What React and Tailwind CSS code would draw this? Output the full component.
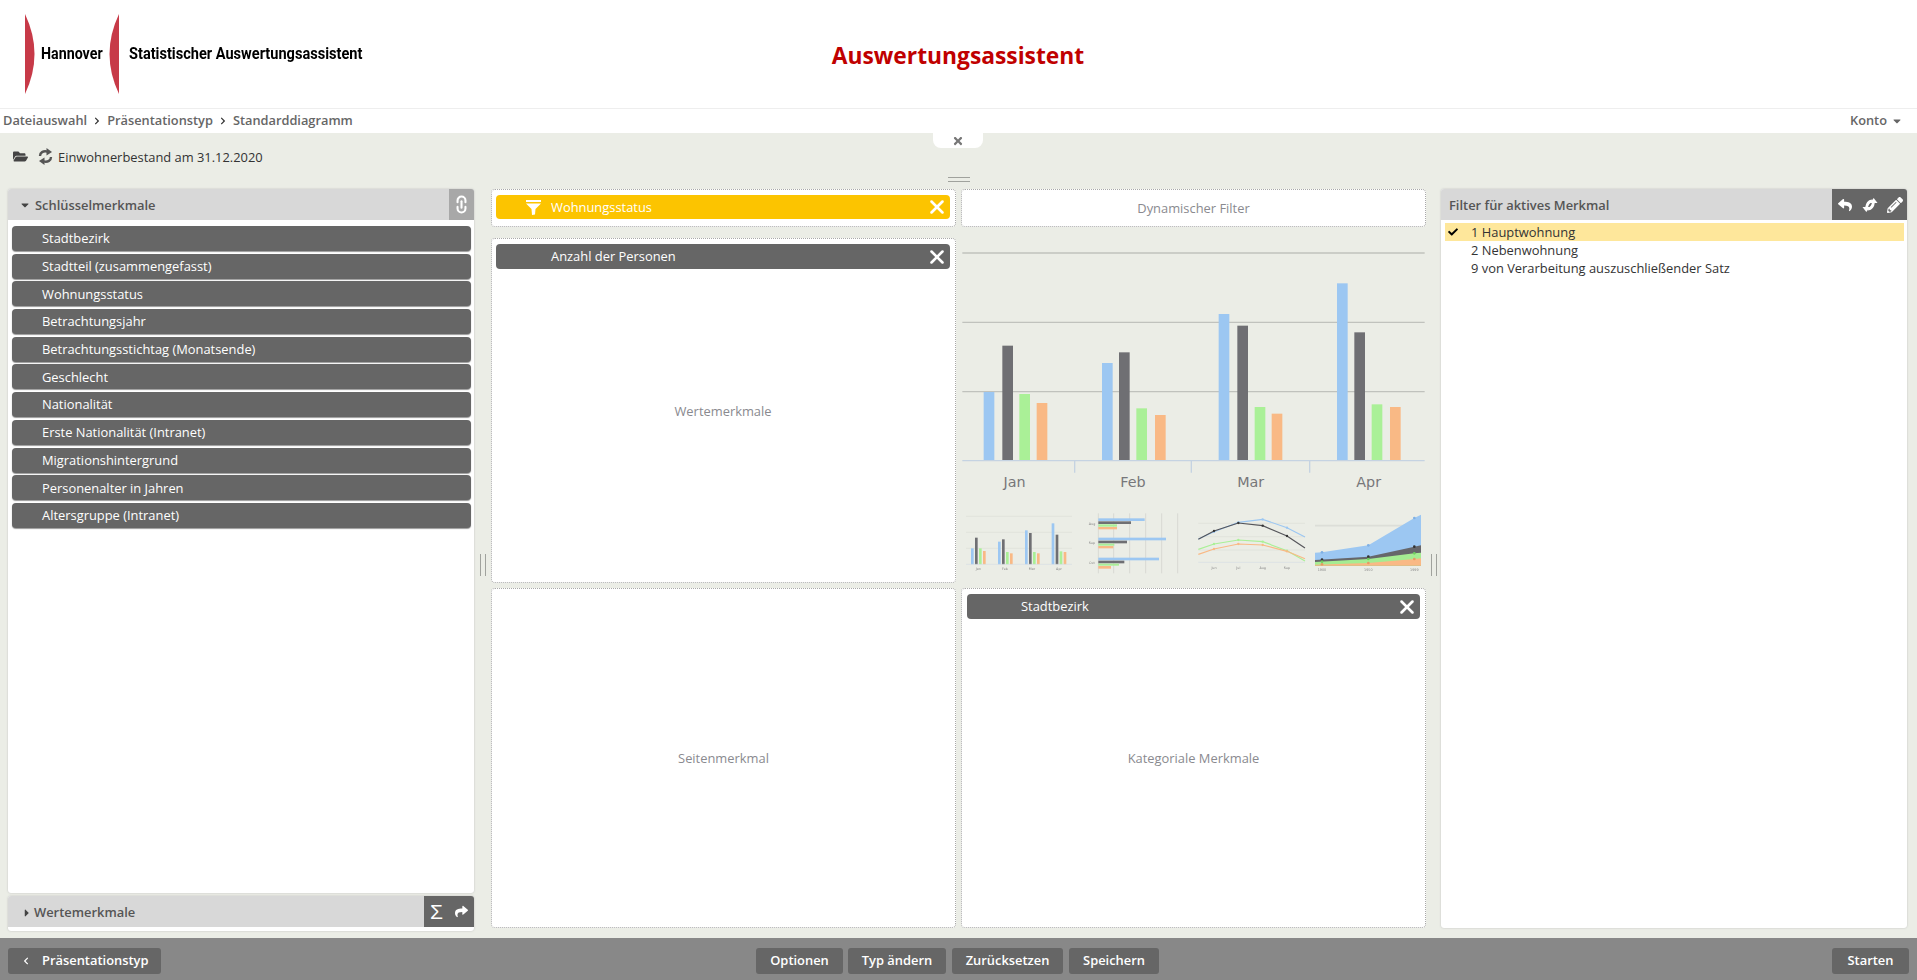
import React from "react";
import { FaFolderOpen, FaReply, FaShare, FaPencilAlt, FaCheck, FaTimes, FaChevronLeft, FaChevronRight, FaCaretDown, FaCaretRight } from "react-icons/fa";
import { Link2, X } from "lucide-react";

const items = ["Stadtbezirk","Stadtteil (zusammengefasst)","Wohnungsstatus","Betrachtungsjahr","Betrachtungsstichtag (Monatsende)","Geschlecht","Nationalität","Erste Nationalität (Intranet)","Migrationshintergrund","Personenalter in Jahren","Altersgruppe (Intranet)"];

const C = { b: "#9cc7f2", d: "#6f6f73", g: "#aaf097", o: "#f9b985" };

function Bars({ data, base, w }) {
  return data.map(([x, top, c], i) => <rect key={i} x={x} y={top} width={w} height={base - top} fill={C[c]} />);
}

const main = [
  [131,636,"b"],[187,497,"d"],[238,642,"g"],[290,669,"o"],
  [486,549,"b"],[537,517,"d"],[589,685,"g"],[645,705,"o"],
  [836,402,"b"],[892,437,"d"],[944,681,"g"],[995,701,"o"],
  [1191,310,"b"],[1243,457,"d"],[1295,673,"g"],[1350,681,"o"],
];
const thumb1 = [
  [93,1105,"b"],[105,1073,"d"],[117,1105,"g"],[129,1113,"o"],
  [174,1085,"b"],[186,1078,"d"],[198,1116,"g"],[210,1120,"o"],
  [255,1051,"b"],[267,1059,"d"],[279,1116,"g"],[291,1120,"o"],
  [335,1030,"b"],[347,1064,"d"],[359,1114,"g"],[371,1116,"o"],
];
const thumb2 = [
  [614,1015,8,"b"],[573,1024,8,"d"],[531,1033,7,"g"],[531,1041,7,"o"],
  [678,1073,8,"b"],[561,1082,8,"d"],[523,1091,6,"g"],[520,1098,7,"o"],
  [657,1133,8,"b"],[553,1142,8,"d"],[537,1151,6,"g"],[513,1158,8,"o"],
];
const lines = [
  ["b",[[775,1077],[822,1055],[895,1027],[968,1018],[1041,1043],[1095,1071]]],
  ["d",[[775,1078],[822,1053],[895,1029],[968,1037],[1041,1068],[1095,1104]]],
  ["g",[[775,1108],[822,1092],[895,1080],[968,1085],[1041,1112],[1095,1143]]],
  ["o",[[775,1123],[822,1107],[895,1092],[968,1095],[1041,1114],[1095,1136]]],
];
const pts = (a) => a.map((p) => p.join(",")).join(" ");
const areaBlue = [[1125,1118],[1146,1117],[1285,1096],[1423,1014],[1443,1004]];
const areaDark = [[1125,1140],[1285,1130],[1423,1100],[1443,1096]];
const areaGreen = [[1125,1146],[1285,1137],[1423,1120],[1443,1118]];
const areaOrange = [[1125,1154],[1285,1149],[1423,1137],[1443,1135]];

function Chart() {
  const t = { fontFamily: "'DejaVu Sans', sans-serif", fill: "#888", textAnchor: "middle" };
  return (
    <svg viewBox="63 174 1395 1035" width="465" height="345" className="block">
      {[219,427,635].map((y) => <line key={y} x1="67" x2="1454" y1={y} y2={y} stroke="#c0c2bd" strokeWidth="4" />)}
      <Bars data={main} base={842} w={32} />
      <line x1="67" x2="1454" y1="842" y2="842" stroke="#c5d3e2" strokeWidth="4" />
      {[404,754,1109].map((x) => <line key={x} x1={x} x2={x} y1="842" y2="878" stroke="#c5d3e2" strokeWidth="4" />)}
      {[["Jan",224],["Feb",579],["Mar",932],["Apr",1286]].map(([s,x]) => <text key={s} x={x} y="920" fontSize="43" {...t} fill="#77777a">{s}</text>)}

      <g className="blur-[0.3px]">
        {[1009,1057,1105].map((y) => <line key={y} x1="78" x2="396" y1={y} y2={y} stroke="#dcded8" strokeWidth="2" />)}
        <Bars data={thumb1} base={1153} w={8} />
        <line x1="78" x2="396" y1="1153" y2="1153" stroke="#d5dde4" strokeWidth="2" />
        {[["Jan",115],["Feb",195],["Mar",276],["Apr",357]].map(([s,x]) => <text key={s} x={x} y="1170" fontSize="10" {...t}>{s}</text>)}

        {[475,521,569,617,665,713].map((x) => <line key={x} x1={x} x2={x} y1="1000" y2="1180" stroke="#d8dad4" strokeWidth="3" />)}
        {thumb2.map(([x2,y,h,c],i) => <rect key={i} x="475" y={y} width={x2-475} height={h} fill={C[c]} />)}
        {[["Aug",1035],["Sep",1092],["Oct",1152]].map(([s,y]) => <text key={s} x="456" y={y} fontSize="10" {...t}>{s}</text>)}

        {[1030,1070,1110].map((y) => <line key={y} x1="775" x2="1095" y1={y} y2={y} stroke="#dcded8" strokeWidth="2" />)}
        <line x1="775" x2="1095" y1="1147" y2="1147" stroke="#d5dde4" strokeWidth="2" />
        {lines.map(([c,p]) => (
          <g key={c}>
            <polyline points={pts(p)} fill="none" stroke={c === "d" ? "#55555a" : C[c]} strokeWidth="3.5" />
            {p.slice(1,5).map(([x,y]) => <circle key={x} cx={x} cy={y} r="3.5" fill={c === "d" ? "#333" : C[c]} />)}
          </g>
        ))}
        {[["Jun",822],["Jul",895],["Aug",968],["Sep",1041]].map(([s,x]) => <text key={s} x={x} y="1166" fontSize="10" {...t}>{s}</text>)}

        <line x1="1125" x2="1443" y1="1037" y2="1037" stroke="#dcded8" strokeWidth="5" />
        <polygon points={`${pts(areaBlue)} 1443,1157 1125,1157`} fill="#9cc7f2" />
        <polygon points={`${pts(areaDark)} 1443,1157 1125,1157`} fill="#66666a" />
        <polygon points={`${pts(areaGreen)} 1443,1157 1125,1157`} fill="#a5ec92" />
        <polygon points={`${pts(areaOrange)} 1443,1157 1125,1157`} fill="#f9b985" />
        {[[1146,1117,"#7fb0e4"],[1285,1096,"#7fb0e4"],[1423,1014,"#7fb0e4"],[1146,1139,"#333"],[1285,1130,"#333"],[1423,1100,"#333"],[1146,1145,"#6fcf60"],[1285,1137,"#6fcf60"],[1423,1120,"#6fcf60"],[1146,1153,"#e59a64"],[1285,1149,"#e59a64"],[1423,1137,"#e59a64"]].map(([x,y,f],i) => <circle key={i} cx={x} cy={y} r="4" fill={f} />)}
        {[["1900",1146],["1950",1285],["1999",1423]].map(([s,x]) => <text key={s} x={x} y="1173" fontSize="10" {...t}>{s}</text>)}
      </g>
    </svg>
  );
}

function SyncIcon({ className = "" }) {
  return (
    <svg viewBox="0 0 15 17" width="15" height="17" className={className} fill="none" stroke="currentColor" strokeWidth="2.4">
      <path d="M2 8 C2 4.5 5 2.6 9.5 3.6" />
      <path d="M13 9 C13 12.5 10 14.4 5.5 13.4" />
      <path d="M8.5 0 L14 4 L8.5 7.5 Z" fill="currentColor" stroke="none" />
      <path d="M6.5 9.5 L1 13 L6.5 17 Z" fill="currentColor" stroke="none" />
    </svg>
  );
}

function SwapIcon({ className = "" }) {
  return (
    <svg viewBox="0 0 16 14" width="16" height="14" className={className} fill="none" stroke="currentColor" strokeWidth="2.8">
      <path d="M11.5 4 C11 8.5 9.5 10.5 6 11" />
      <path d="M4.5 10 C5 5.5 6.5 3.5 10 3" />
      <path d="M8 5 L11.7 0 L15.5 5 Z" fill="currentColor" stroke="none" />
      <path d="M0.5 9 L4.3 14 L8 9 Z" fill="currentColor" stroke="none" />
    </svg>
  );
}

function Chip({ color = "bg-[#666666]", pl = "pl-[55px]", children, h = "h-[25px]" }) {
  return (
    <div className={`${color} ${h} ${pl} pr-[2px] rounded-[4px] flex items-center justify-between text-white`}>
      <span className="pt-[1px]">{children}</span>
      <X className="w-[22px] h-[22px] text-white" strokeWidth={2.8} />
    </div>
  );
}

function Drop({ className = "", children }) {
  return <div className={`bg-white rounded-[4px] border border-dotted border-[#a9a9a9] ${className}`}>{children}</div>;
}

function Btn({ children, className = "" }) {
  return <div className={`h-[26px] bg-[#666666] rounded-[3px] flex items-center font-semibold text-white ${className}`}>{children}</div>;
}

function Handle() {
  return <div className="w-[6px] h-[22px] border-x border-[#a0a29d]" />;
}

export default function App() {
  return (
    <div className="w-[1917px] h-[980px] overflow-hidden flex flex-col bg-[#ebede6] font-['Open_Sans','Liberation_Sans',sans-serif] text-[12.9px] text-[#444]">
      <header className="relative h-[109px] bg-white border-b border-[#eeeeee] flex items-center shrink-0">
        <div className="flex items-center font-['Roboto','Liberation_Sans',sans-serif] font-bold text-black pl-[25px] h-[80px] mt-[-1px]">
          <svg width="10" height="80" viewBox="0 0 10 80" className="shrink-0"><path d="M0 0 Q19 40 0 80 Z" fill="#c73a48" /></svg>
          <span className="ml-[6px] w-[66px] text-[16px] whitespace-nowrap origin-left scale-x-[0.89]">Hannover</span>
          <svg width="10" height="80" viewBox="0 0 10 80" className="shrink-0 ml-[2px]"><path d="M10 0 Q-9 40 10 80 Z" fill="#c73a48" /></svg>
          <span className="ml-[10px] text-[16px] whitespace-nowrap origin-left scale-x-[0.91]">Statistischer Auswertungsassistent</span>
        </div>
        <h1 className="absolute left-0 right-0 top-[39px] text-center pr-[1px] text-[22.8px] leading-[33px] font-bold text-[#c00000]">Auswertungsassistent</h1>
      </header>
      <nav className="h-[24px] bg-white shrink-0 flex items-center justify-between pl-[3px] pr-[14px] pb-[1px] font-semibold text-[#666666] text-[12.8px]">
        <div className="flex items-center">
          <span>Dateiauswahl</span>
          <FaChevronRight className="mx-[6px] text-[8px] text-[#333]" />
          <span>Präsentationstyp</span>
          <FaChevronRight className="mx-[6px] text-[8px] text-[#333]" />
          <span>Standarddiagramm</span>
        </div>
        <div className="flex items-center gap-[4px]">
          <span>Konto</span>
          <FaCaretDown className="text-[12px]" />
        </div>
      </nav>

      <div className="relative h-[56px] shrink-0 flex items-center pl-[13px] pb-[9px] text-[#333]">
        <FaFolderOpen className="text-[15px] text-[#444]" />
        <SyncIcon className="ml-[10px] text-[#555]" />
        <span className="ml-[5px] pt-[2px]">Einwohnerbestand am 31.12.2020</span>
        <div className="absolute left-[933px] top-0 w-[50px] h-[15px] bg-white rounded-b-[8px] flex items-center justify-center">
          <FaTimes className="text-[12px] text-[#777]" />
        </div>
        <div className="absolute left-[948px] top-[44px] w-[22px] h-[5px] border-y border-[#a0a29d]" />
      </div>

      <main className="flex-1 min-h-0 flex pl-[8px] pr-[10px] pb-[10px]">
        {/* Left */}
        <section className="w-[466px] shrink-0 flex flex-col mb-[-3px]">
          <div className="flex-1 min-h-0 bg-white rounded-[3px] shadow-[0_0_2px_#bbb] flex flex-col">
            <div className="h-[31px] shrink-0 bg-[#d8d8d8] rounded-t-[3px] flex items-center justify-between">
              <div className="flex items-center pl-[11px] pt-[2px] font-semibold text-[#555]">
                <FaCaretDown className="text-[12px] mr-[4px] text-[#444]" />
                Schlüsselmerkmale
              </div>
              <div className="w-[25px] h-full bg-[#a8a8a8] rounded-tr-[3px] flex items-center justify-center">
                <Link2 className="w-[19px] h-[19px] text-white rotate-90" strokeWidth={2.6} />
              </div>
            </div>
            <div className="pt-[6px] pl-[4px] pr-[3px]">
              {items.map((s) => (
                <div key={s} className="h-[25px] mb-[2.7px] bg-[#666666] rounded-[4px] pl-[30px] pt-[1px] flex items-center text-white shadow-[0_1px_1px_#999]">{s}</div>
              ))}
            </div>
          </div>
          <div className="mt-[3px] h-[35px] shrink-0 bg-white rounded-[3px] shadow-[0_0_2px_#bbb]">
            <div className="h-[31px] bg-[#d8d8d8] rounded-t-[3px] flex items-center justify-between">
              <div className="flex items-center pl-[13px] pt-[3px] font-semibold text-[#555]">
                <FaCaretRight className="text-[12px] mr-[1px] text-[#444]" />
                Wertemerkmale
              </div>
              <div className="w-[50px] h-full bg-[#666666] rounded-tr-[3px] flex items-center justify-between pl-[6px] pr-[6px] text-white">
                <span className="text-[21px] leading-none font-['Liberation_Sans',sans-serif]">Σ</span>
                <FaShare className="text-[13px]" />
              </div>
            </div>
          </div>
        </section>

        {/* Left splitter */}
        <div className="w-[17px] shrink-0 flex items-center justify-center pt-[12px]"><Handle /></div>

        {/* Center */}
        <section className="w-[935px] shrink-0 grid grid-cols-[465px_465px] grid-rows-[38px_345px_339px] gap-x-[5px]">
          <Drop className="pl-[4px] pr-[5px] pt-[5px]">
            <div className="relative">
              <Chip color="bg-[#fcc400]" h="h-[24px]" pl="pl-[55px]">Wohnungsstatus</Chip>
              <svg viewBox="0 0 15 15" width="15" height="15" className="absolute left-[30px] top-[5px] text-white" fill="currentColor">
                <rect x="0" y="0" width="15" height="2" />
                <path d="M0 3.5 H15 L9.5 9 L9 14.5 L6 15 L5.5 9 Z" />
              </svg>
            </div>
          </Drop>
          <Drop className="flex items-center justify-center text-[#8a8a8f] pt-[1px]">Dynamischer Filter</Drop>
          <Drop className="mt-[11px] h-[345px] pl-[4px] pr-[5px] pt-[5px] flex flex-col">
            <Chip>Anzahl der Personen</Chip>
            <div className="flex-1 flex items-center justify-center text-[#8a8a8f] pb-[27px]">Wertemerkmale</div>
          </Drop>
          <div className="mt-[11px] h-[345px]"><Chart /></div>
          <Drop className="mt-[16px] h-[340px] flex items-center justify-center text-[#8a8a8f] pt-[2px]">Seitenmerkmal</Drop>
          <Drop className="mt-[16px] h-[340px] px-[5px] pt-[5px] flex flex-col">
            <Chip pl="pl-[54px]">Stadtbezirk</Chip>
            <div className="flex-1 flex items-center justify-center text-[#8a8a8f] pb-[28px]">Kategoriale Merkmale</div>
          </Drop>
        </section>

        {/* Right splitter */}
        <div className="w-[15px] shrink-0 flex items-center justify-center pt-[12px]"><Handle /></div>

        {/* Right */}
        <section className="flex-1 min-w-0 bg-white rounded-[3px] shadow-[0_0_2px_#bbb] flex flex-col">
          <div className="h-[31px] shrink-0 bg-[#d8d8d8] rounded-t-[3px] flex items-center justify-between">
            <span className="pl-[8px] pt-[2px] font-semibold text-[#555]">Filter für aktives Merkmal</span>
            <div className="w-[75px] h-full bg-[#666666] rounded-tr-[3px] flex items-center justify-between pl-[6px] pr-[4px] text-white">
              <FaReply className="text-[14px]" />
              <SwapIcon />
              <FaPencilAlt className="text-[16px]" />
            </div>
          </div>
          <div className="pt-[3px] pl-[4px] pr-[3px] text-[#333]">
            <div className="h-[18px] bg-[#fee79b] flex items-center pl-[26px] pt-[1px] relative">
              <FaCheck className="absolute left-[3px] top-[4px] text-[10px] text-black" />
              1 Hauptwohnung
            </div>
            <div className="h-[18px] flex items-center pl-[26px] pt-[1px]">2 Nebenwohnung</div>
            <div className="h-[18px] flex items-center pl-[26px] pt-[1px]">9 von Verarbeitung auszuschließender Satz</div>
          </div>
        </section>
      </main>

      <footer className="h-[42px] shrink-0 bg-[#888888] grid grid-cols-[1fr_auto_1fr] items-center px-[8px] pt-[4px]">
        <div className="flex justify-start">
          <Btn className="w-[153px] pl-[14px]">
            <FaChevronLeft className="text-[8px] mr-[12px]" />
            Präsentationstyp
          </Btn>
        </div>
        <div className="flex gap-[6px] ml-[-2px]">
          <Btn className="w-[87px] mr-[-1px] justify-center">Optionen</Btn>
          <Btn className="w-[98px] justify-center">Typ ändern</Btn>
          <Btn className="w-[111px] justify-center">Zurücksetzen</Btn>
          <Btn className="w-[90px] justify-center">Speichern</Btn>
        </div>
        <div className="flex justify-end">
          <Btn className="w-[77px] justify-center">Starten</Btn>
        </div>
      </footer>
    </div>
  );
}
